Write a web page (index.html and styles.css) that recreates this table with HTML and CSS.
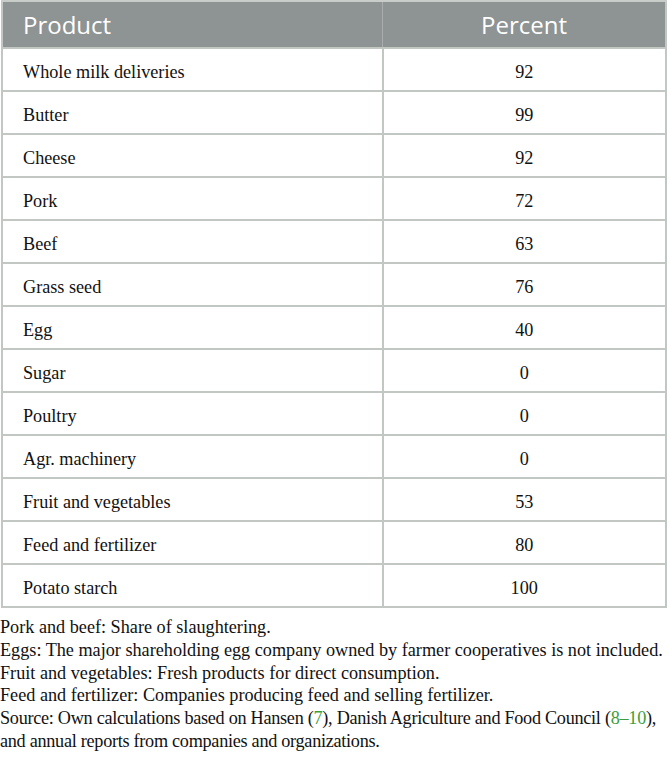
FILE: index.html
```html
<!DOCTYPE html>
<html lang="en">
<head>
  <meta charset="UTF-8">
  <title>Cooperative market shares</title>
  <link rel="stylesheet" href="styles.css">
</head>
<body>

  <table class="shares">
    <thead>
      <tr>
        <th class="col-product">Product</th>
        <th class="col-percent">Percent</th>
      </tr>
    </thead>
    <tbody>
      <tr><td>Whole milk deliveries</td><td class="num">92</td></tr>
      <tr><td>Butter</td><td class="num">99</td></tr>
      <tr><td>Cheese</td><td class="num">92</td></tr>
      <tr><td>Pork</td><td class="num">72</td></tr>
      <tr><td>Beef</td><td class="num">63</td></tr>
      <tr><td>Grass seed</td><td class="num">76</td></tr>
      <tr><td>Egg</td><td class="num">40</td></tr>
      <tr><td>Sugar</td><td class="num">0</td></tr>
      <tr><td>Poultry</td><td class="num">0</td></tr>
      <tr><td>Agr. machinery</td><td class="num">0</td></tr>
      <tr><td>Fruit and vegetables</td><td class="num">53</td></tr>
      <tr><td>Feed and fertilizer</td><td class="num">80</td></tr>
      <tr><td>Potato starch</td><td class="num">100</td></tr>
    </tbody>
  </table>

  <!-- Notes under the table -->
  <div class="notes">
    <p>Pork and beef: Share of slaughtering.</p>
    <p>Eggs: The major shareholding egg company owned by farmer cooperatives is not included.</p>
    <p>Fruit and vegetables: Fresh products for direct consumption.</p>
    <p>Feed and fertilizer: Companies producing feed and selling fertilizer.</p>
    <p class="source">Source: Own calculations based on Hansen (<a href="#ref7">7</a>), Danish Agriculture and Food Council (<a href="#ref8">8&ndash;10</a>),<br>and annual reports from companies and organizations.</p>
  </div>

</body>
</html>
```

FILE: styles.css
```css
body {
  margin: 0;
  padding: 0;
  background-color: #fff;
  color: #111;
  font-family: "Liberation Serif", "Times New Roman", serif;
  font-size: 18.2px;
}
.shares {
  border-collapse: collapse;
  width: 666px;
  margin-left: 1px;
  border: 2px solid #c3c7c3;
}
.shares th {
  background-color: #8e9394;
  color: #fff;
  font-family: "Open Sans", sans-serif;
  font-weight: 400;
  font-size: 24px;
  height: 45px;
  padding: 0 20px;
  border-top: 2px solid #c9cdc9;
  border-right: 1px solid #a9adad;
}
.col-product {
  width: 339px;
  text-align: left;
}
.col-percent {
  text-align: center;
}
.shares td {
  height: 36px;
  padding: 5px 20px 0;
  border: 2px solid #c3c7c3;
}
.shares td.num {
  text-align: center;
}
.notes {
  margin-top: 8px;
  line-height: 22.8px;
}
.notes p {
  margin: 0;
}
.notes .source {
  white-space: nowrap;
  letter-spacing: -0.28px;
}
.notes a {
  color: #3c9e3c;
  text-decoration: none;
}
```
